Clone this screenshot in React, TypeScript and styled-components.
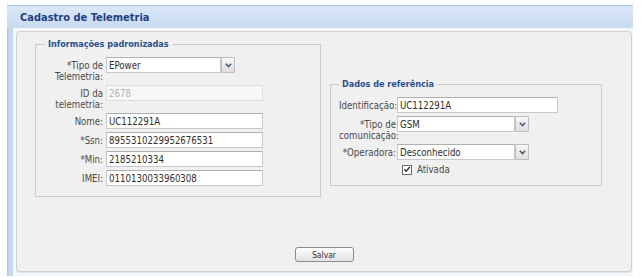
import styled, { createGlobalStyle } from "styled-components";

const GlobalStyle = createGlobalStyle`
  html, body {
    margin: 0;
    padding: 0;
    background: #ffffff;
  }
  body {
    font-family: "DejaVu Sans Condensed", "Liberation Sans", sans-serif;
    font-size: 9.6px;
    color: #444;
  }
`;

export default function App() {
  return (
    <>
      <GlobalStyle />
      <Window>
        <Header>
          <Title>Cadastro de Telemetria</Title>
        </Header>
        <Body>
          <FormPanel>
            <Columns>
              <FieldSet $width={286} $offset={0} $padLeft={9} $padBottom={10}>
                <Legend>Informações padronizadas</Legend>
                <FieldRow $labelWidth={58} $gap={3}>
                  <FieldLabel>{"*Tipo de\nTelemetria:"}</FieldLabel>
                  <ComboBox value="EPower" width={115} />
                </FieldRow>
                <FieldRow $labelWidth={58} $gap={3}>
                  <FieldLabel>{"ID da\ntelemetria:"}</FieldLabel>
                  <TextInput $width={157} defaultValue="2678" disabled />
                </FieldRow>
                <FieldRow $labelWidth={58} $gap={3}>
                  <FieldLabel>Nome:</FieldLabel>
                  <TextInput $width={157} defaultValue="UC112291A" />
                </FieldRow>
                <FieldRow $labelWidth={58} $gap={3}>
                  <FieldLabel>*Ssn:</FieldLabel>
                  <TextInput $width={157} defaultValue="8955310229952676531" />
                </FieldRow>
                <FieldRow $labelWidth={58} $gap={3}>
                  <FieldLabel>*Min:</FieldLabel>
                  <TextInput $width={157} defaultValue="2185210334" />
                </FieldRow>
                <FieldRow $labelWidth={58} $gap={3}>
                  <FieldLabel>IMEI:</FieldLabel>
                  <TextInput $width={157} defaultValue="0110130033960308" />
                </FieldRow>
              </FieldSet>

              <FieldSet $width={272} $offset={40} $padLeft={8} $padBottom={9}>
                <Legend>Dados de referência</Legend>
                <FieldRow $labelWidth={57} $gap={1}>
                  <FieldLabel>Identificação:</FieldLabel>
                  <TextInput $width={161} defaultValue="UC112291A" />
                </FieldRow>
                <FieldRow $labelWidth={57} $gap={1}>
                  <FieldLabel>{"*Tipo de\ncomunicação:"}</FieldLabel>
                  <ComboBox value="GSM" width={118} />
                </FieldRow>
                <FieldRow $labelWidth={57} $gap={1}>
                  <FieldLabel>*Operadora:</FieldLabel>
                  <ComboBox value="Desconhecido" width={118} />
                </FieldRow>
                <FieldRow $labelWidth={57} $gap={1}>
                  <span />
                  <CheckRow>
                    <CheckBox>
                      <svg width="9" height="9" viewBox="0 0 9 9">
                        <path
                          d="M1.5 4.2 L3.6 6.4 L7.6 1.6"
                          fill="none"
                          stroke="#333"
                          strokeWidth="1.6"
                        />
                      </svg>
                    </CheckBox>
                    Ativada
                  </CheckRow>
                </FieldRow>
              </FieldSet>
            </Columns>

            <ButtonBar>
              <Button>Salvar</Button>
            </ButtonBar>
          </FormPanel>
        </Body>
      </Window>
    </>
  );
}

const ComboBox = ({ value, width }: { value: string; width: number }) => {
  return (
    <Combo>
      <TextInput $width={width} defaultValue={value} />
      <Trigger>
        <svg width="7" height="5" viewBox="0 0 7 5">
          <path d="M0.8 0.8 L3.5 3.6 L6.2 0.8" fill="none" stroke="#4a5c7c" strokeWidth="1.5" />
        </svg>
      </Trigger>
    </Combo>
  );
};

const Window = styled.div`
  margin: 5px 0 0 7px;
  width: 626px;
  background: linear-gradient(90deg, #a9c0df 0, #c6d8ef 2px, #c6d8ef 100%);
  border-top: 1px solid #a8c0e0;
`;

const Header = styled.div`
  height: 22px;
  display: flex;
  align-items: center;
  padding-left: 13px;
  background: linear-gradient(#dae7f7, #c8daf1);
`;

const Title = styled.div`
  font-weight: bold;
  font-size: 11px;
  color: #1f4280;
`;

const Body = styled.div`
  margin-left: 6px;
  padding: 3px 1px 4px 3px;
  background: #f3f6fa;
`;

const FormPanel = styled.div`
  box-sizing: border-box;
  height: 241px;
  display: flex;
  flex-direction: column;
  padding: 6px 18px 9px 18px;
  background: #f0f0f0;
  border: 1px solid #cfcfcf;
  border-radius: 4px;
  box-shadow: 0 1px 1px rgba(0, 0, 0, 0.08);
`;

const Columns = styled.div`
  display: flex;
  align-items: flex-start;
  gap: 9px;
`;

const FieldSet = styled.fieldset<{
  $width: number;
  $offset: number;
  $padLeft: number;
  $padBottom: number;
}>`
  box-sizing: border-box;
  width: ${(p) => p.$width}px;
  min-width: 0;
  margin: ${(p) => p.$offset}px 0 0 0;
  padding: 7px 0 ${(p) => p.$padBottom}px ${(p) => p.$padLeft}px;
  border: 1px solid #cacaca;
`;

const Legend = styled.legend`
  padding: 0 3px;
  font-weight: bold;
  font-size: 9px;
  line-height: 12px;
  color: #25508f;
`;

const FieldRow = styled.div<{ $labelWidth: number; $gap: number }>`
  display: grid;
  grid-template-columns: ${(p) => p.$labelWidth}px auto;
  column-gap: ${(p) => p.$gap}px;
  align-items: start;

  & + & {
    margin-top: 3px;
  }
`;

const FieldLabel = styled.label`
  padding-top: 3px;
  line-height: 11px;
  text-align: right;
  white-space: pre-line;
  color: #4a4a4a;
`;

const TextInput = styled.input<{ $width: number }>`
  box-sizing: border-box;
  width: ${(p) => p.$width}px;
  height: 16px;
  margin: 0;
  padding: 0 2px;
  font-family: inherit;
  font-size: 9.6px;
  color: #2e2e2e;
  background: #ffffff;
  border: 1px solid #c8c8c8;
  border-top-color: #b0b0b0;
  outline: none;

  &:disabled {
    color: #b4b4b4;
    background: #f7f7f7;
    border-color: #dcdcdc;
  }
`;

const Combo = styled.div`
  display: flex;
`;

const Trigger = styled.div`
  box-sizing: border-box;
  width: 14px;
  height: 16px;
  display: flex;
  align-items: center;
  justify-content: center;
  background: linear-gradient(#f7f7f7, #dedede);
  border: 1px solid #bdbdbd;
  border-radius: 1px;
`;

const CheckRow = styled.div`
  display: flex;
  align-items: center;
  gap: 5px;
  height: 13px;
  padding-left: 5px;
  color: #4a4a4a;
`;

const CheckBox = styled.span`
  box-sizing: border-box;
  width: 10px;
  height: 10px;
  display: flex;
  align-items: center;
  justify-content: center;
  background: #fff;
  border: 1px solid #6a6a6a;
`;

const ButtonBar = styled.div`
  margin-top: auto;
  display: flex;
  justify-content: center;
`;

const Button = styled.button`
  box-sizing: border-box;
  width: 59px;
  height: 15px;
  padding: 0;
  font-family: inherit;
  font-size: 8.5px;
  color: #333;
  background: linear-gradient(#fdfdfd, #e2e2e2);
  border: 1px solid #8c8c8c;
  border-radius: 3px;
`;
